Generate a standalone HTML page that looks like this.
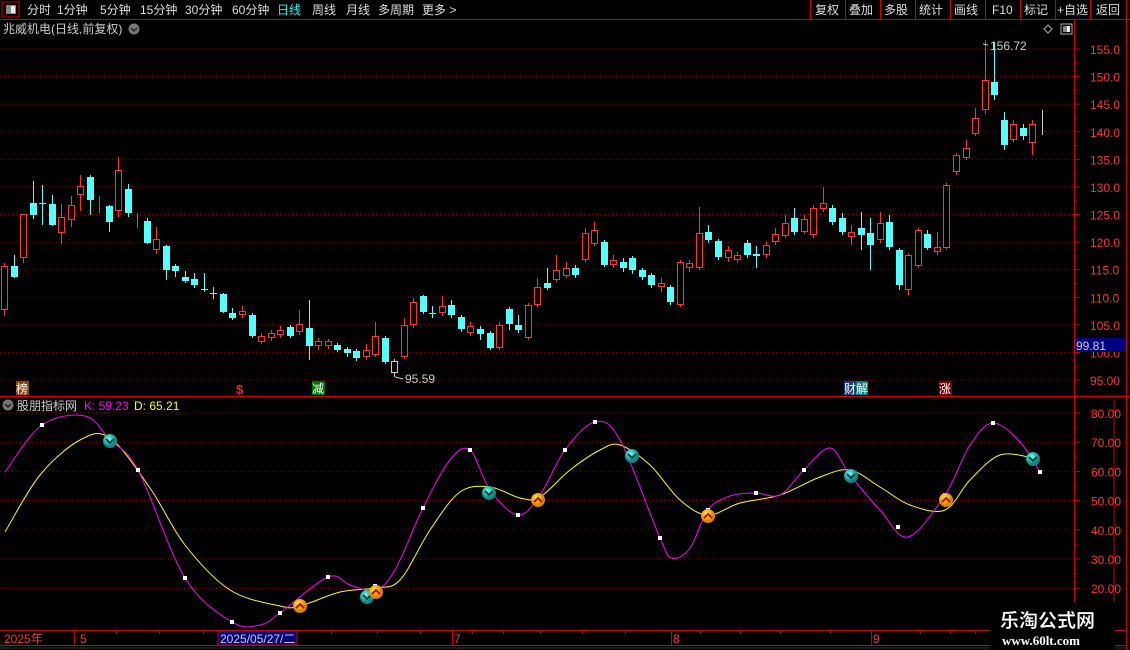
<!DOCTYPE html>
<html><head><meta charset="utf-8">
<style>
html,body{margin:0;padding:0;background:#000;width:1130px;height:650px;overflow:hidden;font-family:"Liberation Sans","Noto Sans CJK SC",sans-serif;}
svg{position:absolute;left:0;top:0}
</style></head>
<body>
<svg id="s" width="1130" height="650" xmlns="http://www.w3.org/2000/svg" font-family="Liberation Sans, Noto Sans CJK SC, sans-serif"></svg>
<script>
var s=document.getElementById('s');var h='';
function L(x1,y1,x2,y2,c,w,d){h+='<line x1="'+x1+'" y1="'+y1+'" x2="'+x2+'" y2="'+y2+'" stroke="'+c+'" stroke-width="'+(w||1)+'"'+(d?' stroke-dasharray="'+d+'"':'')+'/>';}
function R(x,y,w,ht,f,st){h+='<rect x="'+x+'" y="'+y+'" width="'+w+'" height="'+ht+'" fill="'+f+'"'+(st?' stroke="'+st+'"':'')+'/>';}
function T(x,y,t,c,sz,extra){h+='<text x="'+x+'" y="'+y+'" fill="'+c+'" font-size="'+(sz||12)+'" '+(extra||'')+'>'+t+'</text>';}
var RED='#d00000';
L(0,19.5,1130,19.5,RED);
R(2,2,17,15,'none',RED);
R(6,5,10,9,'#888');R(11,6,4,7,'#eee');
var tb=[['分时',27],['1分钟',57],['5分钟',100],['15分钟',140],['30分钟',185],['60分钟',232],['日线',277],['周线',312],['月线',346],['多周期',378],['更多 >',422]];
tb.forEach(function(a){T(a[1],14,a[0],a[0]=='日线'?'#00ffff':'#ddd',12);});
var rb=[['复权',815],['叠加',849],['多股',884],['统计',919],['画线',954],['F10',992],['标记',1024],['+自选',1057],['返回',1096]];
[810.5,845.5,880.5,915.5,950.5,985.5,1020.5,1055.5,1090.5,1126.5].forEach(function(x){L(x,0,x,19,RED);});
rb.forEach(function(a){T(a[1],14,a[0],'#ddd',12);});
T(3,33,'兆威机电(日线,前复权)','#ccc',12);
h+='<circle cx="134" cy="29" r="5.5" fill="#777"/><path d="M131,28 l3,3 l3,-3" stroke="#222" stroke-width="1.5" fill="none"/>';
h+='<path d="M1048,25 l4,4 l-4,4 l-4,-4z" stroke="#aaa" fill="none"/>';
R(1061,24,11,10,'none','#aaa');R(1063,26,7,6,'#888');R(1067,26,3,6,'#eee');
L(1074.5,20,1074.5,630,RED);L(1126.5,20,1126.5,650,RED);
L(0,396.5,1130,396.5,RED,1.5);
L(0,630.5,1126,630.5,RED);L(0,645.5,1126,645.5,RED);
for(var p=95;p<=155;p+=5){var y=49+(155-p)*5.517;L(0,y,1074,y,'#900000',1,'1,3');L(1074,y,1080,y,RED);T(1090,y+5,p.toFixed(2).slice(0,5),'#ff3333',12);}
for(var p=97.5;p<=155;p+=5){var y=49+(155-p)*5.517;L(1074,y,1077,y,RED);}
R(1075,338,51,14,'#000080');T(1076,350,'99.81','#ccc',12);
var C=[[266,310,263,316,'r'],[266,277,255,278,'c'],[214,258,214,263,'r'],[203,215,181,219,'c'],[203,204,185,225,'c'],[204,225,195,226,'c'],[217,233,204,244,'r'],[205,220,196,227,'r'],[186,195,175,211,'r'],[177,200,175,215,'c'],[207,208,196,213,'r'],[206,222,205,232,'c'],[170,211,157,217,'r'],[189,213,184,217,'c'],[220,221,213,228,'r'],[221,243,218,244,'c'],[239,250,227,254,'r'],[246,270,245,280,'c'],[266,271,264,277,'c'],[277,281,271,283,'c'],[279,285,273,288,'c'],[289,290,273,292,'c'],[293,294,287,299,'c'],[294,312,293,313,'c'],[313,318,308,320,'c'],[311,315,306,318,'r'],[315,336,313,338,'c'],[336,342,333,344,'r'],[333,338,330,341,'r'],[330,335,326,338,'r'],[327,336,325,338,'c'],[324,332,310,335,'r'],[328,346,300,360,'c'],[341,346,338,350,'r'],[341,346,339,349,'r'],[345,350,343,352,'c'],[349,353,347,357,'c'],[351,358,349,361,'c'],[350,357,344,360,'r'],[336,355,322,357,'r'],[338,362,336,364,'c'],[361,373,359,377,'w'],[325,357,318,359,'r'],[302,325,298,328,'r'],[296,312,295,314,'c'],[313,314,306,318,'c'],[306,313,296,316,'r'],[305,315,300,318,'c'],[317,329,315,332,'c'],[326,333,322,336,'r'],[329,334,326,340,'c'],[333,348,331,350,'c'],[325,348,322,350,'r'],[309,324,307,330,'c'],[325,330,315,333,'c'],[305,338,303,340,'r'],[287,305,278,307,'r'],[283,288,268,290,'c'],[270,280,255,282,'r'],[268,276,262,278,'r'],[268,275,265,278,'c'],[233,260,228,262,'r'],[230,244,222,246,'r'],[242,265,240,267,'c'],[260,265,255,268,'r'],[262,268,258,272,'c'],[258,270,256,274,'c'],[270,277,268,280,'c'],[275,285,273,288,'c'],[283,287,278,292,'r'],[287,302,285,305,'c'],[262,305,260,307,'r'],[263,268,260,272,'r'],[233,268,207,270,'r'],[232,240,225,243,'c'],[241,257,239,260,'c'],[250,258,246,262,'r'],[255,260,252,263,'r'],[243,255,240,258,'c'],[254,256,246,268,'c'],[245,255,242,258,'r'],[234,242,228,245,'r'],[223,236,215,238,'r'],[218,232,208,235,'c'],[219,232,215,234,'r'],[208,235,205,238,'r'],[203,209,187,212,'r'],[208,222,205,225,'c'],[218,232,213,235,'c'],[232,237,225,245,'r'],[228,235,212,250,'c'],[233,245,218,270,'c'],[223,240,212,243,'r'],[222,247,215,250,'c'],[250,285,248,290,'c'],[255,290,253,295,'r'],[230,266,228,268,'r'],[234,248,230,250,'c'],[247,252,232,255,'r'],[185,248,183,250,'r'],[155,172,153,175,'r'],[148,158,140,160,'r'],[118,134,108,136,'r'],[80,110,40,114,'r'],[82,95,42,100,'c'],[120,145,112,150,'c'],[124,140,120,142,'r'],[128,136,124,140,'c'],[124,143,120,155,'r'],[122,123,110,135,'w']];
C.forEach(function(c,i){var x=Math.round(4+9.52*i);var col=c[4]=='r'?'#ff3232':(c[4]=='c'?'#54ffff':'#ccc');
L(x+0.5,c[2],x+0.5,c[3],col);var t=c[0],b=c[1];if(b-t<1)b=t+1;
if(c[4]=='r'||c[4]=='w'){R(x-2.5,t+0.5,6,b-t-1,'#000',col);}else R(x-3,t,7,b-t,col);});
T(990,50,'156.72','#ccc',12);L(983,44,988,45,'#ccc');
T(405,383,'95.59','#ccc',12);L(395,377,403,379,'#ccc');
R(16,381,13,14,'#8b4513');T(16,393,'榜','#fff',12);
T(236,394,'$','#ff2020',13,'font-weight="bold"');
R(312,381,13,14,'#007000');T(312,393,'减','#fff',12);
R(844,381,12,14,'#1a3a7a');R(856,381,12,14,'#008080');T(844,393,'财解','#fff',12);
R(939,381,13,14,'#800000');T(939,393,'涨','#fff',12);
h+='<circle cx="8" cy="405" r="5.5" fill="#777"/><path d="M5,404 l3,3 l3,-3" stroke="#222" stroke-width="1.5" fill="none"/>';
T(17,410,'股朋指标网','#ccc',12);T(84,410,'K: 59.23','#ff00ff',12);T(134,410,'D: 65.21','#ffff00',12);
for(var v=20;v<=80;v+=10){var y=413+(80-v)*2.92;L(0,y,1074,y,'#900000',1,'1,3');L(1074,y,1080,y,RED);T(1091,y+5,v.toFixed(2),'#ff3333',12);}
for(var v=25;v<=75;v+=10){var y=413+(80-v)*2.92;L(1074,y,1077,y,RED);}
L(1114,400,1114,630,RED);
function path(pts,c){var d='M'+pts[0][0]+','+pts[0][1];for(var i=0;i<pts.length-1;i++){var p0=pts[i>0?i-1:0],p1=pts[i],p2=pts[i+1],p3=pts[i+2<pts.length?i+2:i+1];
var c1x=p1[0]+(p2[0]-p0[0])/6,c1y=p1[1]+(p2[1]-p0[1])/6,c2x=p2[0]-(p3[0]-p1[0])/6,c2y=p2[1]-(p3[1]-p1[1])/6;
d+=' C'+c1x.toFixed(1)+','+c1y.toFixed(1)+' '+c2x.toFixed(1)+','+c2y.toFixed(1)+' '+p2[0]+','+p2[1];}h+='<path d="'+d+'" stroke="'+c+'" fill="none" stroke-width="1"/>';}
var K=[[5,472],[42,425],[85,416],[110,440],[138,470],[185,578],[232,622],[260,625],[280,613],[328,577],[350,585],[375,590],[395,570],[423,508],[450,460],[470,450],[490,490],[518,515],[540,495],[565,450],[595,422],[620,440],[660,538],[672,558],[690,548],[708,510],[730,496],[756,493],[780,495],[804,470],[830,448],[850,475],[880,510],[908,537],[945,495],[970,445],[993,423],[1020,442],[1040,472]];
var D=[[5,532],[40,475],[80,440],[110,438],[150,488],[185,545],[230,590],[280,606],[300,606],[340,592],[375,588],[400,580],[430,530],[460,492],[490,487],[520,498],[540,497],[570,470],[600,450],[620,445],[650,465],[680,500],[708,515],[740,503],[780,495],[820,477],[850,470],[880,487],[910,505],[945,510],[970,480],[1000,455],[1033,458]];
path(D,'#ffff00');path(K,'#ff00ff');
[[42,425],[138,470],[185,578],[232,622],[280,613],[328,577],[375,586],[423,508],[470,450],[518,515],[565,450],[595,422],[660,538],[708,510],[756,493],[804,470],[850,475],[898,527],[945,495],[993,423],[1040,472]].forEach(function(p){R(p[0]-2,p[1]-2,4,4,'#fff');});
h+='<defs><radialGradient id="g" cx="40%" cy="35%"><stop offset="0" stop-color="#7ff"/><stop offset="1" stop-color="#0a8a80"/></radialGradient><radialGradient id="o" cx="40%" cy="35%"><stop offset="0" stop-color="#ffee60"/><stop offset="1" stop-color="#e08000"/></radialGradient></defs>';
[[110,441],[367,597],[489,493],[632,456],[851,476],[1033,459]].forEach(function(p){h+='<circle cx="'+p[0]+'" cy="'+p[1]+'" r="7" fill="url(#g)"/><path d="M'+(p[0]-4)+','+(p[1]-2)+' l4,4 l4,-4" stroke="#044" stroke-width="2" fill="none"/>';});
[[300,606],[376,592],[538,500],[708,516],[946,500]].forEach(function(p){h+='<circle cx="'+p[0]+'" cy="'+p[1]+'" r="7" fill="url(#o)"/><path d="M'+(p[0]-4)+','+(p[1]+2)+' l4,-4 l4,4" stroke="#c01000" stroke-width="2" fill="none"/>';});
[74,116,159,203,244,265,282,331,377,420,452,472,503,540,582,625,671,700,740,780,830,871,920,950,975].forEach(function(x){L(x+0.5,631,x+0.5,634,RED);});
L(74.5,631,74.5,645,RED);L(452.5,631,452.5,645,RED);L(671.5,631,671.5,645,RED);L(871.5,631,871.5,645,RED);
T(4,643,'2025年','#ff3333',12);T(80,643,'5','#ff3333',12);T(454,643,'7','#ff3333',12);T(673,643,'8','#ff3333',12);T(873,643,'9','#ff3333',12);
R(218,631,79,14,'#000080',RED);T(220,643,'2025/05/27/二','#ccc',12);
L(0,648,1126,648,'#333');
R(990,602,125,48,'#000');
T(1000,627,'乐淘公式网','#fff',19,'font-weight="bold" stroke="#000" stroke-width="0.3"');
T(1002,645,'www.60lt.com','#fff',13,'font-family="Liberation Serif, serif" font-weight="bold"');
s.innerHTML=h;
</script>
</body></html>
